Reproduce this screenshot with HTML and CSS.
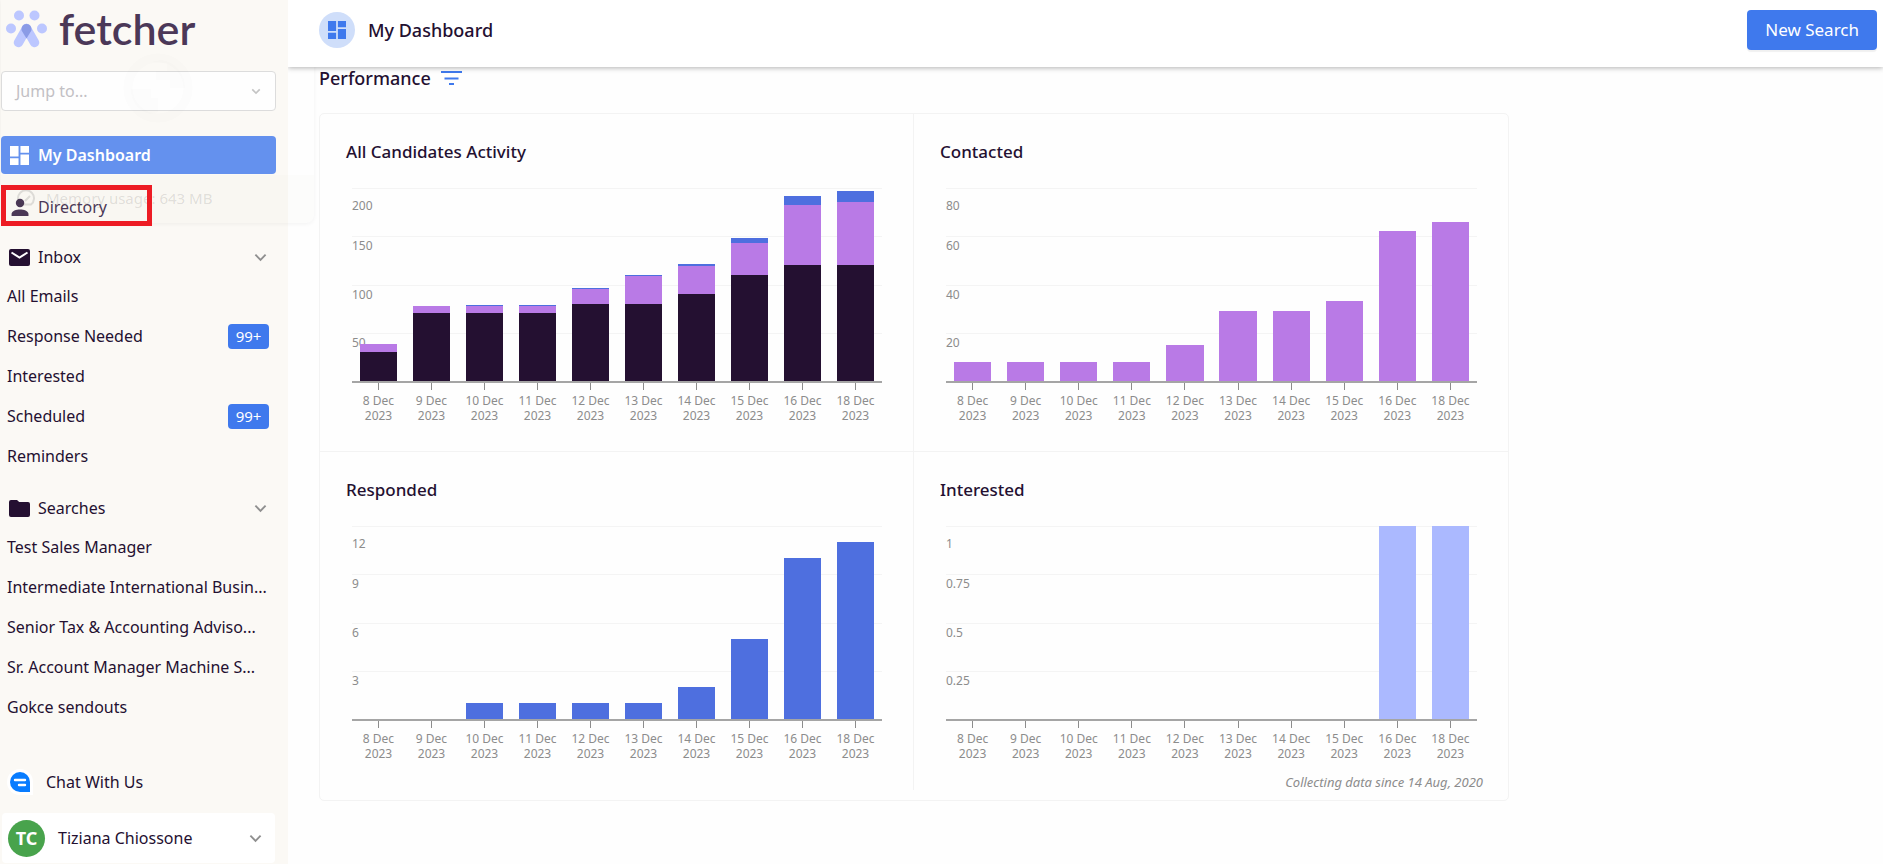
FILE: index.html
```html
<!DOCTYPE html>
<html lang="en">
<head>
<meta charset="utf-8">
<title>My Dashboard</title>
<link rel="stylesheet" href="styles.css">
</head>
<body>
<div class="app">
  <aside class="sidebar">
    <a class="logo" href="#" aria-label="fetcher home">
      <svg class="logo-mark" viewBox="0 0 42 38" aria-hidden="true">
        <g fill="#bcc7ff">
          <circle cx="13" cy="5.500" r="5"/><circle cx="28.500" cy="5.500" r="5"/>
          <circle cx="5" cy="18.500" r="5"/><circle cx="36" cy="18.500" r="5"/>
        </g>
        <g stroke="#bcc7ff" stroke-width="9.500" stroke-linecap="round">
          <path d="M20.500 18.500 12.500 32.500"/><path d="M20.500 18.500 28.500 32.500"/>
        </g>
        <path d="M15.800 17.500a4.900 4.900 0 0 1 9.400 0q.8 2-.4 4L20.500 28.500 16.200 21.500q-1.200-2-.4-4z" fill="#8a9be6"/>
      </svg>
      <span class="logo-text">fetcher</span>
    </a>
    <button class="jump" type="button">
      <span>Jump to...</span>
      <svg class="chev-s" viewBox="0 0 12 8" aria-hidden="true"><path d="M1.500 1.500 6 6l4.500-4.500"/></svg>
    </button>
    <nav class="nav" aria-label="Main">
      <a class="item active" href="#">
        <svg class="ico" viewBox="0 0 20 20" fill="currentColor" aria-hidden="true"><path d="M0 0h9v11H0zM11 0h9v7h-9zM0 13h9v7H0zM11 9h9v11h-9z"/></svg>
        My Dashboard
      </a>
      <a class="item directory" href="#">
        <svg class="ico" viewBox="0 0 18 18" fill="currentColor" aria-hidden="true"><circle cx="9.500" cy="4.800" r="4"/><path d="M1.500 17v-2c0-2.800 4.600-4.200 8-4.200s8 1.400 8 4.200v2z"/></svg>
        Directory
      </a>
      <section class="group">
        <button class="item head" type="button">
          <svg class="ico wide" viewBox="0 0 21 17" aria-hidden="true"><rect width="21" height="17" rx="2" fill="#241031"/><path d="M2.500 3.500 10.500 8.500 18.500 3.500" fill="none" stroke="#fff" stroke-width="2"/></svg>
          <span class="grow">Inbox</span>
          <svg class="chev" viewBox="0 0 14 9" aria-hidden="true"><path d="M1.500 1.500 7 7l5.500-5.500"/></svg>
        </button>
        <a class="sub" href="#"><span>All Emails</span></a>
        <a class="sub" href="#"><span>Response Needed</span><b class="badge">99+</b></a>
        <a class="sub" href="#"><span>Interested</span></a>
        <a class="sub" href="#"><span>Scheduled</span><b class="badge">99+</b></a>
        <a class="sub" href="#"><span>Reminders</span></a>
      </section>
      <section class="group">
        <button class="item head" type="button">
          <svg class="ico wide" viewBox="0 0 21 17" aria-hidden="true"><path d="M2 0h6l2.200 2H19a2 2 0 0 1 2 2v11a2 2 0 0 1-2 2H2a2 2 0 0 1-2-2V2a2 2 0 0 1 2-2z" fill="#241031"/></svg>
          <span class="grow">Searches</span>
          <svg class="chev" viewBox="0 0 14 9" aria-hidden="true"><path d="M1.500 1.500 7 7l5.500-5.500"/></svg>
        </button>
        <a class="sub" href="#"><span>Test Sales Manager</span></a>
        <a class="sub" href="#"><span>Intermediate International Busin...</span></a>
        <a class="sub" href="#"><span>Senior Tax &amp; Accounting Adviso...</span></a>
        <a class="sub" href="#"><span>Sr. Account Manager Machine S...</span></a>
        <a class="sub" href="#"><span>Gokce sendouts</span></a>
      </section>
    </nav>
    <div class="foot">
      <button class="chat" type="button">
        <svg class="chat-ico" viewBox="0 0 26 26" aria-hidden="true"><path d="M13 0a13 13 0 1 0 0 26h13V13A13 13 0 0 0 13 0z" fill="#fff"/><path d="M13 3a10 10 0 1 0 0 20h10V13A10 10 0 0 0 13 3z" fill="#087cff"/><path d="M8 11h10M12 16h6" stroke="#fff" stroke-width="2.400" stroke-linecap="round"/></svg>
        Chat With Us
      </button>
      <button class="user" type="button">
        <span class="avatar">TC</span>
        <span class="grow">Tiziana Chiossone</span>
        <svg class="chev" viewBox="0 0 14 9" aria-hidden="true"><path d="M1.500 1.500 7 7l5.500-5.500"/></svg>
      </button>
    </div>
  </aside>

  <div class="hover-card">
    <svg class="globe" viewBox="0 0 70 70" aria-hidden="true"><circle cx="35" cy="35" r="30" fill="none" stroke="currentColor" stroke-width="9"/><path d="M8 36h20v9h7v14l-8 2C15 58 8 48 8 36zM28 9l16 1v8H33v9h14v8h15c0-14-9-26-24-28z" fill="currentColor"/></svg>
    <p class="memory">
      <svg viewBox="0 0 18 16" aria-hidden="true"><path d="M4 14.500a8 8 0 1 1 10 0z" fill="none" stroke="currentColor" stroke-width="2"/><path d="M8 11l5-5" stroke="currentColor" stroke-width="2"/></svg>
      Memory usage: 643 MB
    </p>
  </div>
  <div class="highlight"></div>

  <div class="page">
    <header class="topbar">
      <span class="round"><svg viewBox="0 0 20 20" fill="currentColor" aria-hidden="true"><path d="M0 0h9v11H0zM11 0h9v7h-9zM0 13h9v7H0zM11 9h9v11h-9z"/></svg></span>
      <h1>My Dashboard</h1>
      <button class="primary" type="button">New Search</button>
    </header>
    <main class="content">
      <div class="perf">
        <h2>Performance</h2>
        <button class="filter" type="button" aria-label="Filter"><svg viewBox="0 0 21 14" aria-hidden="true"><path d="M0 1h21M3.500 7.500h14M8 13h5" stroke="#3f79ed" stroke-width="2"/></svg></button>
      </div>
      <div class="card" id="charts"></div>
    </main>
  </div>
</div>
<script src="charts.js"></script>
</body>
</html>
```
FILE: styles.css
```css
* { box-sizing: border-box; }
body {
  margin: 0;
  background: #fefefe;
  color: #241031;
  font: 16px/24px "Noto Sans", "Open Sans", sans-serif;
}
h1, h2, h3, p { margin: 0; }
button { font: inherit; color: inherit; border: 0; background: none; padding: 0; text-align: left; }
a { color: inherit; text-decoration: none; }
.app { display: flex; min-height: 100vh; position: relative; }

.sidebar {
  width: 288px;
  flex: none;
  display: flex;
  flex-direction: column;
  padding: 0 12px 0 1px;
  background: #fbf9f5;
}
.logo { display: flex; align-items: center; height: 58px; margin-bottom: 13px; padding-left: 5px; gap: 11px; color: #4b3858; }
.logo-mark { width: 42px; height: 38px; }
.logo-text { font: 600 43px/50px Lato, sans-serif; }
.jump {
  display: flex;
  align-items: center;
  justify-content: space-between;
  height: 40px;
  padding: 0 14px;
  border: 1px solid #dcdcdc;
  border-radius: 4px;
  background: #fefefe;
  color: #c2c0c4;
}
.chev-s, .chev { fill: none; stroke: #c4c4c4; stroke-width: 2; }
.chev-s { width: 10px; height: 7px; }
.chev { width: 13px; height: 9px; stroke: #8f8f8f; }
.nav { padding-top: 25px; }
.item {
  display: flex;
  align-items: center;
  width: 100%;
  height: 38px;
  padding: 0 9px 0 9px;
  gap: 9px;
}
.ico { width: 19px; height: 19px; flex: none; }
.wide { width: 21px; height: 17px; }
.active { border-radius: 4px; background: #6491ee; color: #fff; font-weight: 600; margin-bottom: 14px; }
.directory { color: #4b3858; margin-bottom: 12px; }
.head { padding-left: 8px; gap: 8px; }
.grow { flex: 1; }
.group { margin-bottom: 13px; }
.sub { display: flex; align-items: center; justify-content: space-between; height: 40px; padding: 0 7px 0 6px; white-space: nowrap; }
.badge {
  min-width: 41px;
  height: 25px;
  border-radius: 4px;
  background: #3f79ed;
  color: #fff;
  font-size: 15px;
  font-weight: 400;
  line-height: 24px;
  text-align: center;
}
.foot { margin-top: auto; padding: 0 1px 1px; }
.chat { display: flex; align-items: center; gap: 13px; height: 40px; margin-bottom: 11px; padding-left: 5px; }
.chat-ico { width: 26px; height: 26px; }
.user { display: flex; align-items: center; width: 100%; height: 50px; padding: 0 13px 0 6px; gap: 13px; border-radius: 4px; background: #fff; }
.avatar { width: 37px; height: 37px; border-radius: 50%; background: #48a34c; color: #fff; font-size: 18px; font-weight: 700; line-height: 37px; text-align: center; }

.hover-card {
  position: absolute;
  left: 1px;
  top: 0;
  width: 313px;
  height: 223px;
  display: flex;
  flex-direction: column;
  justify-content: space-between;
  align-items: center;
  padding-top: 53px;
  border-radius: 0 0 8px 8px;
  box-shadow: 0 1px 4px rgba(0, 0, 0, .05);
  color: rgba(60, 60, 60, .15);
  pointer-events: none;
}
.globe { width: 70px; height: 70px; color: rgba(60, 60, 60, .012); }
.memory { display: flex; gap: 11px; width: 100%; height: 48px; padding: 11px 0 0 16px; border-radius: 0 0 8px 8px; background: rgba(60, 60, 40, .012); font-size: 15px; }
.memory svg { width: 18px; height: 16px; margin-top: 4px; }
.highlight { position: absolute; left: 1px; top: 185px; width: 151px; height: 41px; border: 5px solid #ed1c24; pointer-events: none; }

.page { flex: 1; min-width: 0; }
.topbar { display: flex; align-items: center; height: 67px; padding: 0 6px 7px 31px; background: #fff; box-shadow: 0 1px 5px rgba(0, 0, 0, .3); clip-path: inset(0 0 -8px 0); }
.round { display: grid; place-items: center; width: 36px; height: 36px; border-radius: 50%; background: #cfdefa; color: #3f79ed; }
.round svg { width: 18px; height: 18px; }
h1 { flex: 1; margin-left: 13px; font-size: 18px; font-weight: 500; }
.primary { height: 40px; padding: 0 18px; border-radius: 4px; background: #3f79ed; color: #fff; font-size: 17px; box-shadow: 0 2px 1px rgba(0, 0, 0, .06); }
.content { padding: 0 31px; }
.perf { display: flex; align-items: center; gap: 10px; height: 22px; margin-bottom: 24px; }
h2, h3 { font-size: 17px; line-height: 24px; font-weight: 500; }
h2 { font-size: 18px; }
.filter { display: flex; }
.filter svg { width: 21px; height: 14px; }

.card { display: grid; grid-template-columns: 1fr 1fr; max-width: 1190px; padding-bottom: 10px; border: 1px solid #f3f3f3; border-radius: 5px; }
.cell { height: 338px; padding: 26px 31px 0 26px; }
.cell:nth-child(odd) { border-right: 1px solid #f3f3f3; }
.cell:nth-child(-n+2) { border-bottom: 1px solid #f3f3f3; }
.plot { position: relative; height: 195px; margin: 24px 0 0 6px; border-bottom: 2px solid #a5a5a5; }
.grid { position: absolute; inset: 0; display: grid; grid-template-rows: repeat(4, 1fr); }
.grid span { border-top: 1px solid #f4f4f4; padding-top: 1px; color: #8c8c8c; font-size: 12px; line-height: 16px; }
.grid span:first-child { padding-top: 9px; }
.bars { position: relative; height: 100%; display: grid; grid-template-columns: repeat(10, 1fr); }
.stack { display: flex; flex-direction: column-reverse; margin: 0 15%; }
.dark { background: #241031; }
.purple { background: #b97ae6; }
.blue { background: #4e6fdf; }
.sky { background: #abb9ff; }
.dates { display: grid; grid-template-columns: repeat(10, 1fr); margin-left: 6px; color: #8c8c8c; font-size: 12px; line-height: 15px; text-align: center; }
.dates span::before { content: ""; display: block; width: 1px; height: 7px; margin: 0 auto 3px; background: #8c8c8c; }
.note { margin: 12px -6px 0 0; color: #8c8c8c; font-size: 13px; line-height: 18px; font-style: italic; text-align: right; }
```
FILE: charts.js
```js
const days = [8, 9, 10, 11, 12, 13, 14, 15, 16, 18];
const contacted = [8, 8, 8, 8, 15, 29, 29, 33, 62, 66];
const charts = [
  { title: "All Candidates Activity", max: 200, ticks: [200, 150, 100, 50], series: [
    ["dark", [30, 70, 70, 70, 80, 80, 90, 110, 120, 120]],
    ["purple", contacted],
    ["blue", [0, 0, 1, 1, 1, 1, 2, 5, 10, 11]]] },
  { title: "Contacted", max: 80, ticks: [80, 60, 40, 20], series: [["purple", contacted]] },
  { title: "Responded", max: 12, ticks: [12, 9, 6, 3], series: [["blue", [0, 0, 1, 1, 1, 1, 2, 5, 10, 11]]] },
  { title: "Interested", max: 1, ticks: [1, 0.75, 0.5, 0.25], note: "Collecting data since 14 Aug, 2020",
    series: [["sky", [0, 0, 0, 0, 0, 0, 0, 0, 1, 1]]] },
];
document.getElementById("charts").innerHTML = charts.map(c => `
  <section class="cell">
    <h3>${c.title}</h3>
    <div class="plot">
      <div class="grid">${c.ticks.map(t => `<span>${t}</span>`).join("")}</div>
      <div class="bars">${days.map((_, i) => `<div class="stack">${c.series.map(([k, v]) =>
        `<div class="${k}" style="height:${v[i] / c.max * 100}%"></div>`).join("")}</div>`).join("")}</div>
    </div>
    <div class="dates">${days.map(d => `<span>${d} Dec<br>2023</span>`).join("")}</div>
    ${c.note ? `<p class="note">${c.note}</p>` : ""}
  </section>`).join("");
```
